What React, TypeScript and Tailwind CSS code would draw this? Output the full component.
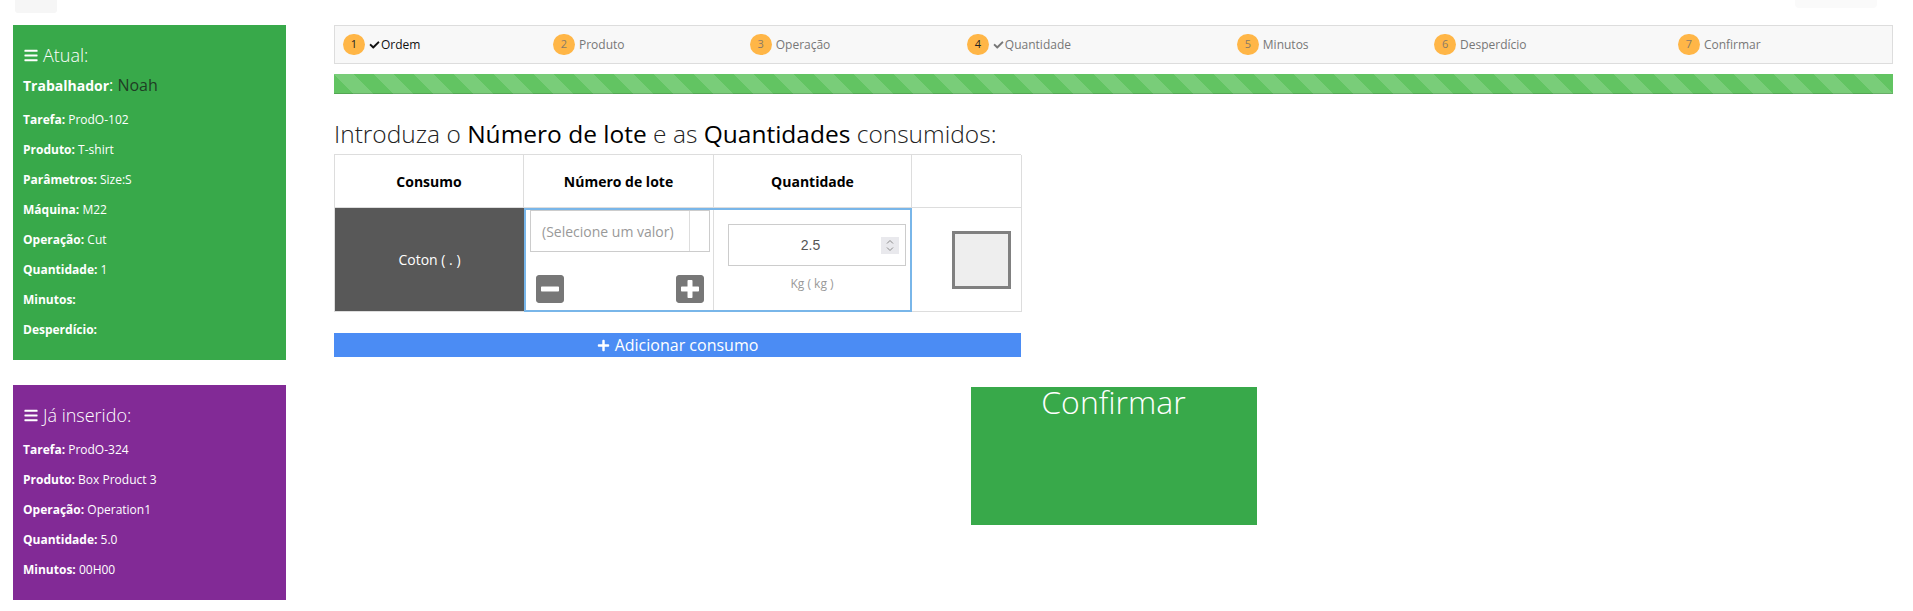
import { FaBars, FaCheck, FaMinusSquare, FaPlus, FaPlusSquare } from "react-icons/fa"

const steps = [
  { n: 1, label: "Ordem", done: true, current: true },
  { n: 2, label: "Produto" },
  { n: 3, label: "Operação" },
  { n: 4, label: "Quantidade", done: true, numDark: true },
  { n: 5, label: "Minutos" },
  { n: 6, label: "Desperdício" },
  { n: 7, label: "Confirmar" },
]

const atual = [
  ["Tarefa", "ProdO-102"],
  ["Produto", "T-shirt"],
  ["Parâmetros", "Size:S"],
  ["Máquina", "M22"],
  ["Operação", "Cut"],
  ["Quantidade", "1"],
  ["Minutos", ""],
  ["Desperdício", ""],
]

const inserido = [
  ["Tarefa", "ProdO-324"],
  ["Produto", "Box Product 3"],
  ["Operação", "Operation1"],
  ["Quantidade", "5.0"],
  ["Minutos", "00H00"],
]

function InfoRow({ label, value }: { label: string; value: string }) {
  return (
    <div className="h-[30px] whitespace-nowrap text-[12px] leading-[30px] text-white">
      <b className="font-bold">{label}:</b> {value}
    </div>
  )
}

function PanelTitle({ text }: { text: string }) {
  return (
    <div className="h-[30px] text-[18px] font-light leading-[30px] text-white">
      <FaBars className="mr-[4px] inline-block h-[15px] w-[16px] align-[-1px]" />
      {text}
    </div>
  )
}

function Spinner() {
  return (
    <svg width="18" height="17" viewBox="0 0 18 17" className="shrink-0">
      <rect width="18" height="17" fill="#e9e9ed" />
      <polyline points="6,6.5 9,3.5 12,6.5" fill="none" stroke="#8a8a8a" strokeWidth="1" />
      <polyline points="6,10.5 9,13.5 12,10.5" fill="none" stroke="#8a8a8a" strokeWidth="1" />
    </svg>
  )
}

export default function App() {
  return (
    <div className="min-h-screen bg-white font-['Open_Sans','Liberation_Sans',sans-serif] text-[#333]">
      <div className="flex h-[13px] justify-between">
        <div className="ml-[15px] h-[13px] w-[42px] rounded-b-[3px] bg-[#f6f6f6]" />
        <div className="mr-[36px] h-[8px] w-[82px] rounded-b-[4px] bg-[#fafafa]" />
      </div>

      <div className="mt-[12px] flex pl-[13px]">
        {/* sidebar */}
        <div className="w-[273px] shrink-0">
          <div className="bg-[#38a94a] pb-[15px] pl-[10px] pt-[15px]">
            <PanelTitle text="Atual:" />
            <div className="h-[30px] whitespace-nowrap text-[16px] leading-[30px] text-white">
              <b className="text-[14px] font-bold">Trabalhador</b>: <span className="text-[#1f3d24]">Noah</span>
            </div>
            <div className="mt-[5px]">
              {atual.map(([l, v]) => (
                <InfoRow key={l} label={l} value={v} />
              ))}
            </div>
          </div>

          <div className="mt-[25px] bg-[#822a96] pb-[15px] pl-[10px] pt-[15px]">
            <PanelTitle text="Já inserido:" />
            <div className="mt-[5px]">
              {inserido.map(([l, v]) => (
                <InfoRow key={l} label={l} value={v} />
              ))}
            </div>
          </div>
        </div>

        {/* main */}
        <div className="ml-[48px] w-[1559px] shrink-0">
          <div className="border border-[#ddd] bg-[#f8f8f8]">
            <table className="w-full">
              <tbody>
                <tr>
                  {steps.map((s) => (
                    <td key={s.n} className="h-[37px] whitespace-nowrap px-[8px] align-middle">
                      <div className="flex items-center">
                        <span
                          className={`inline-flex h-[21px] w-[22px] items-center justify-center rounded-full bg-[#ffb647] text-[11px] ${
                            s.current || s.numDark ? "text-[#222]" : "text-[#8a7a66]"
                          }`}
                        >
                          {s.n}
                        </span>
                        <span
                          className={`ml-[4px] flex items-center text-[12px] ${
                            s.current ? "text-[#111]" : "text-[#777]"
                          }`}
                        >
                          {s.done ? <FaCheck className="mr-[1px] h-[10px] w-[11px]" /> : null}
                          {s.label}
                        </span>
                      </div>
                    </td>
                  ))}
                </tr>
              </tbody>
            </table>
          </div>

          <div className="mt-[10px] h-[20px] bg-[#62c462] bg-[linear-gradient(45deg,rgba(255,255,255,.15)_25%,transparent_25%,transparent_50%,rgba(255,255,255,.15)_50%,rgba(255,255,255,.15)_75%,transparent_75%,transparent)] bg-[length:40px_40px] shadow-[inset_0_-1px_0_rgba(0,0,0,0.15)]" />

          <h2 className="mb-[7px] mt-[27px] text-[24.5px] font-light leading-[26px] text-[#222]">
            Introduza o <span className="font-normal text-black">Número de lote</span> e as{" "}
            <span className="font-normal text-black">Quantidades</span> consumidos:
          </h2>

          <div className="w-[687px]">
            <div className="grid grid-cols-[189px_190px_198px_110px] border-l border-t border-[#ddd]">
              {["Consumo", "Número de lote", "Quantidade", ""].map((h, i) => (
                <div
                  key={i}
                  className="flex h-[53px] items-center justify-center border-b border-r border-[#ddd] text-[14px] font-bold text-black"
                >
                  {h}
                </div>
              ))}

              <div className="flex h-[104px] items-center justify-center border-b border-[#ddd] bg-[#585858] text-[14px] text-white">
                Coton ( . )
              </div>

              <div className="col-span-2 grid h-[104px] grid-cols-[188px_1fr] border-2 border-[#79b6e9]">
                <div className="border-r border-[#ddd] px-[4px]">
                  <div className="flex h-[42px] w-[180px] border border-[#ccc]">
                    <div className="flex flex-1 items-center pl-[11px] text-[14px] text-[#999]">
                      (Selecione um valor)
                    </div>
                    <div className="w-[20px] border-l border-[#ddd]" />
                  </div>
                  <div className="mt-[21px] flex w-[180px] justify-between px-[4px] text-[#777]">
                    <FaMinusSquare className="h-[32px] w-[32px]" />
                    <FaPlusSquare className="h-[32px] w-[32px]" />
                  </div>
                </div>
                <div className="flex flex-col items-center">
                  <div className="ml-[9px] mt-[14px] flex h-[42px] w-[178px] items-center border border-[#ccc] pl-[12px] pr-[6px]">
                    <span className="flex-1 text-center font-['Liberation_Sans',sans-serif] text-[14px] text-[#555]">2.5</span>
                    <Spinner />
                  </div>
                  <div className="mt-[10px] text-[12px] leading-[16px] text-[#999]">Kg ( kg )</div>
                </div>
              </div>

              <div className="flex h-[104px] items-center justify-end border-b border-r border-[#ddd] pr-[10px]">
                <div className="h-[58px] w-[59px] border-[3px] border-[#808080] bg-[#eeeeee]" />
              </div>
            </div>

            <button className="mt-[21px] flex h-[24px] w-[687px] items-center justify-center gap-[5px] bg-[#4b8cf4] text-[16px] text-white">
              <FaPlus className="h-[13px] w-[13px]" />
              Adicionar consumo
            </button>
          </div>

          <button className="mx-auto mt-[30px] block h-[138px] w-[286px] bg-[#38a94a] text-center align-top">
            <span className="block h-full text-[32px] font-light leading-[30px] text-white">Confirmar</span>
          </button>
        </div>
      </div>
    </div>
  )
}
